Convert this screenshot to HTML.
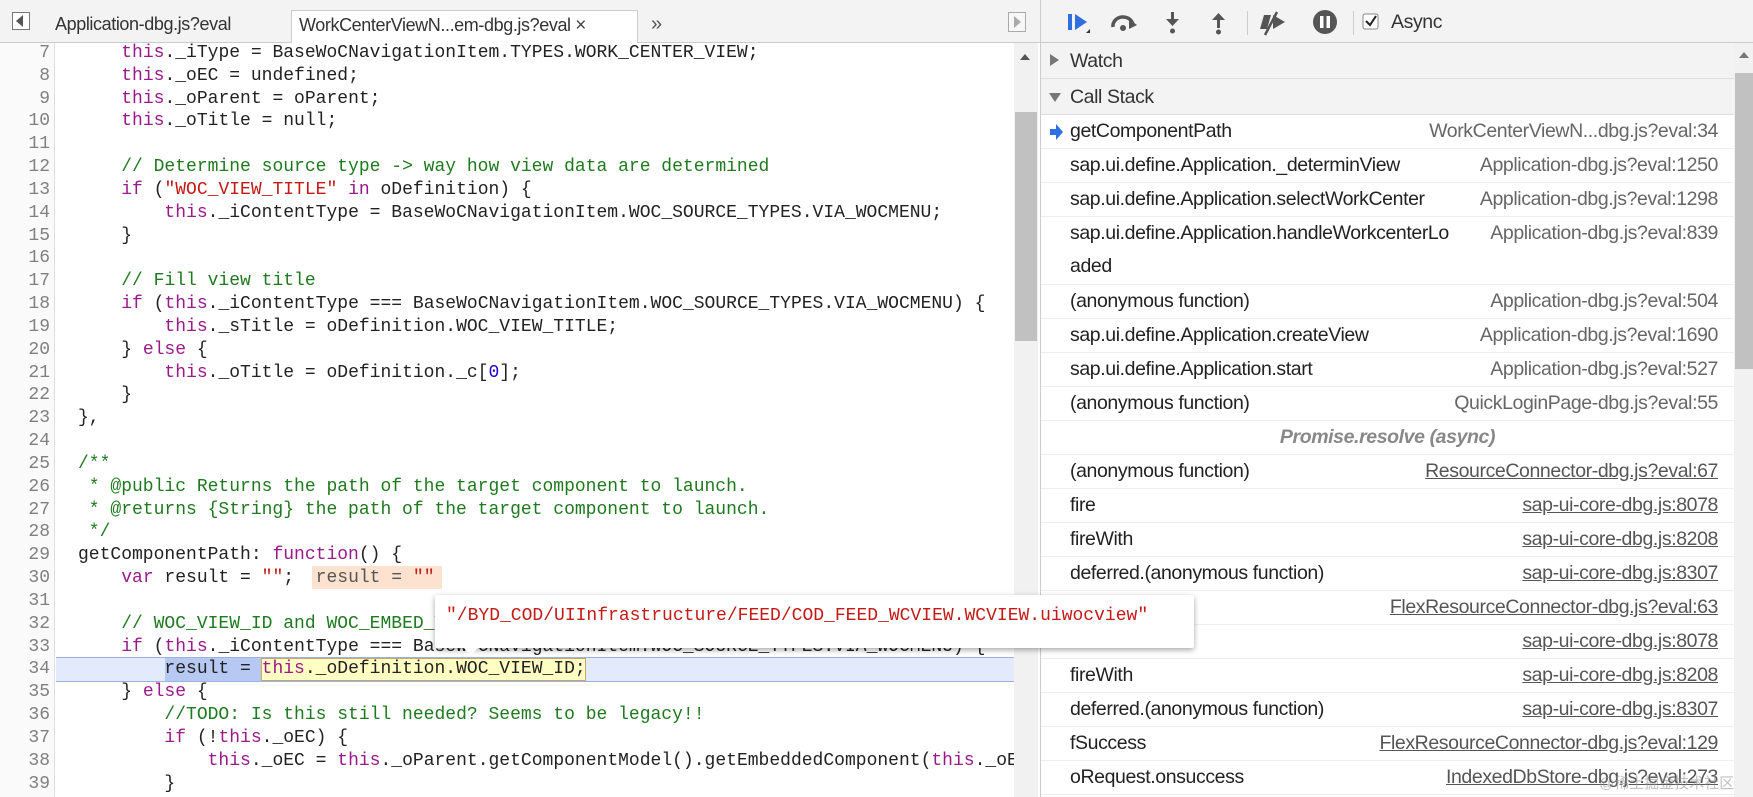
<!DOCTYPE html>
<html><head><meta charset="utf-8"><style>
*{margin:0;padding:0;box-sizing:border-box}
body{width:1753px;height:797px;overflow:hidden;background:#fff;font-family:"Liberation Sans",sans-serif;position:relative}
.abs{position:absolute}
#tabs{left:0;top:0;width:1040px;height:43px;background:#f3f3f3;border-bottom:1px solid #ccc}
.tab{position:absolute;top:10px;height:33px;font-size:18px;color:#333;line-height:29px;letter-spacing:-0.4px}
#code{left:0;top:43px;width:1014px;height:754px;overflow:hidden}
.gut{position:absolute;left:0;top:0;width:55px;height:754px;background:#fafafa;border-right:1px solid #ddd}
.ln{position:absolute;left:0;width:50px;text-align:right;font:18px/22.83px "Liberation Mono",monospace;color:#808080}
.cl{position:absolute;left:78px;white-space:pre;font:18px/22.83px "Liberation Mono",monospace;color:#222}
.k{color:#9a1a8a}.s{color:#c41a16}.c{color:#1f7a1f}.n{color:#1c00cf}
#rp{left:1040px;top:0;width:713px;height:797px;border-left:1px solid #ccc;background:#fff}
.row{position:absolute;left:0;width:693px;height:34px;border-bottom:1px solid #eee;font-size:19.5px;line-height:33px;color:#222;letter-spacing:-0.4px}
.row .l{position:absolute;left:29px}
.row .r{position:absolute;right:16px;color:#666}
.row .u{text-decoration:underline;color:#555}
</style></head><body>

<div id="tabs" class="abs">
  <div class="abs" style="left:12px;top:12px;width:18px;height:18px;border:1px solid #777;background:#fff"></div>
  <div class="abs" style="left:16px;top:15px;width:0;height:0;border-top:6px solid transparent;border-bottom:6px solid transparent;border-right:7px solid #555"></div>
  <div class="tab" style="left:55px">Application-dbg.js?eval</div>
  <div class="tab" style="left:291px;width:347px;background:#fff;border:1px solid #ccc;border-bottom:none;padding-left:7px">WorkCenterViewN...em-dbg.js?eval <span style="font-size:19px;color:#444">×</span></div>
  <div class="tab" style="left:651px;font-size:20px;color:#555">»</div>
  <div class="abs" style="left:1008px;top:12px;width:18px;height:20px;border:1px solid #aaa;background:#f7f7f7"></div>
  <div class="abs" style="left:1014px;top:16px;border-top:6px solid transparent;border-bottom:6px solid transparent;border-left:7px solid #aaa"></div>
</div>

<div id="code" class="abs">
  <div class="gut"></div>
  <div class="abs" style="left:56px;top:614px;width:958px;height:25px;background:#e3eafb;border-top:1px solid #9cb1e0;border-bottom:1px solid #9cb1e0"></div>
  <div class="abs" style="left:165px;top:615px;width:96px;height:23px;background:#b7c9f2"></div>
  <div class="abs" style="left:261px;top:615px;width:325px;height:23px;background:#ffffc4;border:1px solid #c9a56f"></div>
  <div class="abs" style="left:312px;top:523px;width:130px;height:23px;background:#fde3cf"></div>
  <div id="lines"></div>
</div>

<div class="abs" style="left:1014px;top:43px;width:24px;height:754px;background:#f1f1f1"></div>
<div class="abs" style="left:1020px;top:54px;border-left:5px solid transparent;border-right:5px solid transparent;border-bottom:6px solid #555"></div>
<div class="abs" style="left:1015px;top:112px;width:22px;height:229px;background:#c1c1c1"></div>

<div id="rp" class="abs">
  <div class="abs" style="left:0;top:0;width:713px;height:43px;background:#f3f3f3;border-bottom:1px solid #ccc"></div>
  <svg class="abs" style="left:20px;top:8px" width="340" height="30" viewBox="0 0 340 30">
    <rect x="7" y="6" width="4" height="16" fill="#2f6fe0"/><path d="M14 6 L26 14 L14 22 Z" fill="#2f6fe0"/><path d="M25 25 L29 25 L29 21 Z" fill="#333"/>
    <path d="M52 19 A10 9 0 0 1 72 17" stroke="#555" stroke-width="3.5" fill="none"/><path d="M68 11 L76 17 L68 21 Z" fill="#555"/><circle cx="62" cy="20" r="3" fill="#555"/>
    <rect x="110" y="4" width="3" height="9" fill="#555"/><path d="M105 11 L118 11 L111.5 18 Z" fill="#555"/><circle cx="111.5" cy="23" r="2.5" fill="#555"/>
    <rect x="156" y="10" width="3" height="10" fill="#555"/><path d="M151 12 L164 12 L157.5 5 Z" fill="#555"/><circle cx="157.5" cy="24" r="2.5" fill="#555"/>
    <rect x="186" y="3" width="1" height="24" fill="#ccc"/>
    <path d="M203 7 L210 7 L206 21 L199 21 Z M212 7 L224 14 L212 21 Z" fill="#555"/><path d="M216 4 L204 27" stroke="#555" stroke-width="2.5"/>
    <circle cx="264" cy="14" r="12" fill="#555"/><rect x="259" y="8" width="3.5" height="12" fill="#fff"/><rect x="265.5" y="8" width="3.5" height="12" fill="#fff"/>
    <rect x="292" y="3" width="1" height="24" fill="#ccc"/>
    <rect x="302" y="6" width="15" height="15" rx="2" fill="#fff" stroke="#888"/><path d="M305 13 L309 17 L315 8" stroke="#222" stroke-width="2" fill="none"/>
  </svg>
  <div class="abs" style="left:350px;top:11px;font-size:19.5px;color:#333;letter-spacing:-0.4px">Async</div>

  <div class="abs" style="left:0;top:43px;width:693px;height:36px;background:#f3f3f3;border-bottom:1px solid #ddd"></div>
  <div class="abs" style="left:9px;top:54px;border-top:6px solid transparent;border-bottom:6px solid transparent;border-left:9px solid #777"></div>
  <div class="abs" style="left:29px;top:50px;font-size:19.5px;color:#333;letter-spacing:-0.4px">Watch</div>
  <div class="abs" style="left:0;top:79px;width:693px;height:36px;background:#f3f3f3;border-bottom:1px solid #ddd"></div>
  <div class="abs" style="left:8px;top:93px;border-left:6px solid transparent;border-right:6px solid transparent;border-top:9px solid #777"></div>
  <div class="abs" style="left:29px;top:86px;font-size:19.5px;color:#333;letter-spacing:-0.4px">Call Stack</div>
  <div id="stack"></div>
  <div class="abs" style="left:693px;top:43px;width:20px;height:754px;background:#f1f1f1"></div>
  <div class="abs" style="left:698px;top:52px;border-left:5px solid transparent;border-right:5px solid transparent;border-bottom:6px solid #777"></div>
  <div class="abs" style="left:694px;top:73px;width:18px;height:296px;background:#c1c1c1"></div>
  <div class="abs" style="left:558px;top:772px;font-family:'Liberation Sans','Noto Sans CJK SC',sans-serif;font-size:15px;color:rgba(150,150,150,.6)">@稀土掘金技术社区</div>
</div>

<div class="abs" style="left:435px;top:595px;width:759px;height:53px;background:#fff;box-shadow:0 2px 6px rgba(0,0,0,.35);border-radius:2px;z-index:5"></div>
<div class="abs" style="left:462px;top:646px;width:0;height:0;border-left:9px solid transparent;border-right:9px solid transparent;border-top:9px solid #fff;z-index:6"></div>
<div class="abs" style="left:446px;top:605px;font:18px/22px 'Liberation Mono',monospace;color:#c41a16;white-space:pre;z-index:6">"/BYD_COD/UIInfrastructure/FEED/COD_FEED_WCVIEW.WCVIEW.uiwocview"</div>

<script>
const L=[
[7,'    <span class="k">this</span>._iType = BaseWoCNavigationItem.TYPES.WORK_CENTER_VIEW;'],
[8,'    <span class="k">this</span>._oEC = undefined;'],
[9,'    <span class="k">this</span>._oParent = oParent;'],
[10,'    <span class="k">this</span>._oTitle = null;'],
[11,''],
[12,'    <span class="c">// Determine source type -> way how view data are determined</span>'],
[13,'    <span class="k">if</span> (<span class="s">"WOC_VIEW_TITLE"</span> <span class="k">in</span> oDefinition) {'],
[14,'        <span class="k">this</span>._iContentType = BaseWoCNavigationItem.WOC_SOURCE_TYPES.VIA_WOCMENU;'],
[15,'    }'],
[16,''],
[17,'    <span class="c">// Fill view title</span>'],
[18,'    <span class="k">if</span> (<span class="k">this</span>._iContentType === BaseWoCNavigationItem.WOC_SOURCE_TYPES.VIA_WOCMENU) {'],
[19,'        <span class="k">this</span>._sTitle = oDefinition.WOC_VIEW_TITLE;'],
[20,'    } <span class="k">else</span> {'],
[21,'        <span class="k">this</span>._oTitle = oDefinition._c[<span class="n">0</span>];'],
[22,'    }'],
[23,'},'],
[24,''],
[25,'<span class="c">/**</span>'],
[26,'<span class="c"> * @public Returns the path of the target component to launch.</span>'],
[27,'<span class="c"> * @returns {String} the path of the target component to launch.</span>'],
[28,'<span class="c"> */</span>'],
[29,'getComponentPath: <span class="k">function</span>() {'],
[30,'    <span class="k">var</span> result = <span class="s">""</span>;  <span style="color:#555">result = <span class="s">""</span></span>'],
[31,''],
[32,'    <span class="c">// WOC_VIEW_ID and WOC_EMBED_VIEW_ID are determined</span>'],
[33,'    <span class="k">if</span> (<span class="k">this</span>._iContentType === BaseWoCNavigationItem.WOC_SOURCE_TYPES.VIA_WOCMENU) {'],
[34,'        result = <span class="k">this</span>._oDefinition.WOC_VIEW_ID;'],
[35,'    } <span class="k">else</span> {'],
[36,'        <span class="c">//TODO: Is this still needed? Seems to be legacy!!</span>'],
[37,'        <span class="k">if</span> (!<span class="k">this</span>._oEC) {'],
[38,'            <span class="k">this</span>._oEC = <span class="k">this</span>._oParent.getComponentModel().getEmbeddedComponent(<span class="k">this</span>._oEC)'],
[39,'        }']];
let h='';
L.forEach((l,i)=>{const t=-1+i*22.83;h+=`<div class="ln" style="top:${t}px">${l[0]}</div><div class="cl" style="top:${t}px">${l[1]}</div>`});
document.getElementById('lines').innerHTML=h;
const S=[
['getComponentPath','WorkCenterViewN...dbg.js?eval:34',0],
['sap.ui.define.Application._determinView','Application-dbg.js?eval:1250',0],
['sap.ui.define.Application.selectWorkCenter','Application-dbg.js?eval:1298',0],
['sap.ui.define.Application.handleWorkcenterLo','Application-dbg.js?eval:839',2],
['(anonymous function)','Application-dbg.js?eval:504',0],
['sap.ui.define.Application.createView','Application-dbg.js?eval:1690',0],
['sap.ui.define.Application.start','Application-dbg.js?eval:527',0],
['(anonymous function)','QuickLoginPage-dbg.js?eval:55',0],
['P','',0],
['(anonymous function)','ResourceConnector-dbg.js?eval:67',1],
['fire','sap-ui-core-dbg.js:8078',1],
['fireWith','sap-ui-core-dbg.js:8208',1],
['deferred.(anonymous function)','sap-ui-core-dbg.js:8307',1],
['fSuccess','FlexResourceConnector-dbg.js?eval:63',1],
['fire','sap-ui-core-dbg.js:8078',1],
['fireWith','sap-ui-core-dbg.js:8208',1],
['deferred.(anonymous function)','sap-ui-core-dbg.js:8307',1],
['fSuccess','FlexResourceConnector-dbg.js?eval:129',1],
['oRequest.onsuccess','IndexedDbStore-dbg.js?eval:273',1]];
let s='',yy=115;
S.forEach((r,i)=>{
 const hh=r[2]==2?68:34;
 if(r[0]=='P'){s+=`<div class="row" style="top:${yy}px;height:34px;text-align:center;font-weight:bold;font-style:italic;color:#888">Promise.resolve (async)</div>`;}
 else{
 let l=r[0];if(r[2]==2)l+='<br>aded';
 s+=`<div class="row" style="top:${yy}px;height:${hh}px;line-height:33px"><span class="l">${l}</span><span class="r${r[2]==1?' u':''}">${r[1]}</span></div>`;
 if(i==0)s+=`<svg class="abs" style="left:9px;top:${yy+9}px" width="14" height="16"><path d="M0 5 H6 V0 L13 8 L6 16 V11 H0 Z" fill="#2f6fe0"/></svg>`;}
 yy+=hh;});
document.getElementById('stack').innerHTML=s;
</script>
</body></html>
